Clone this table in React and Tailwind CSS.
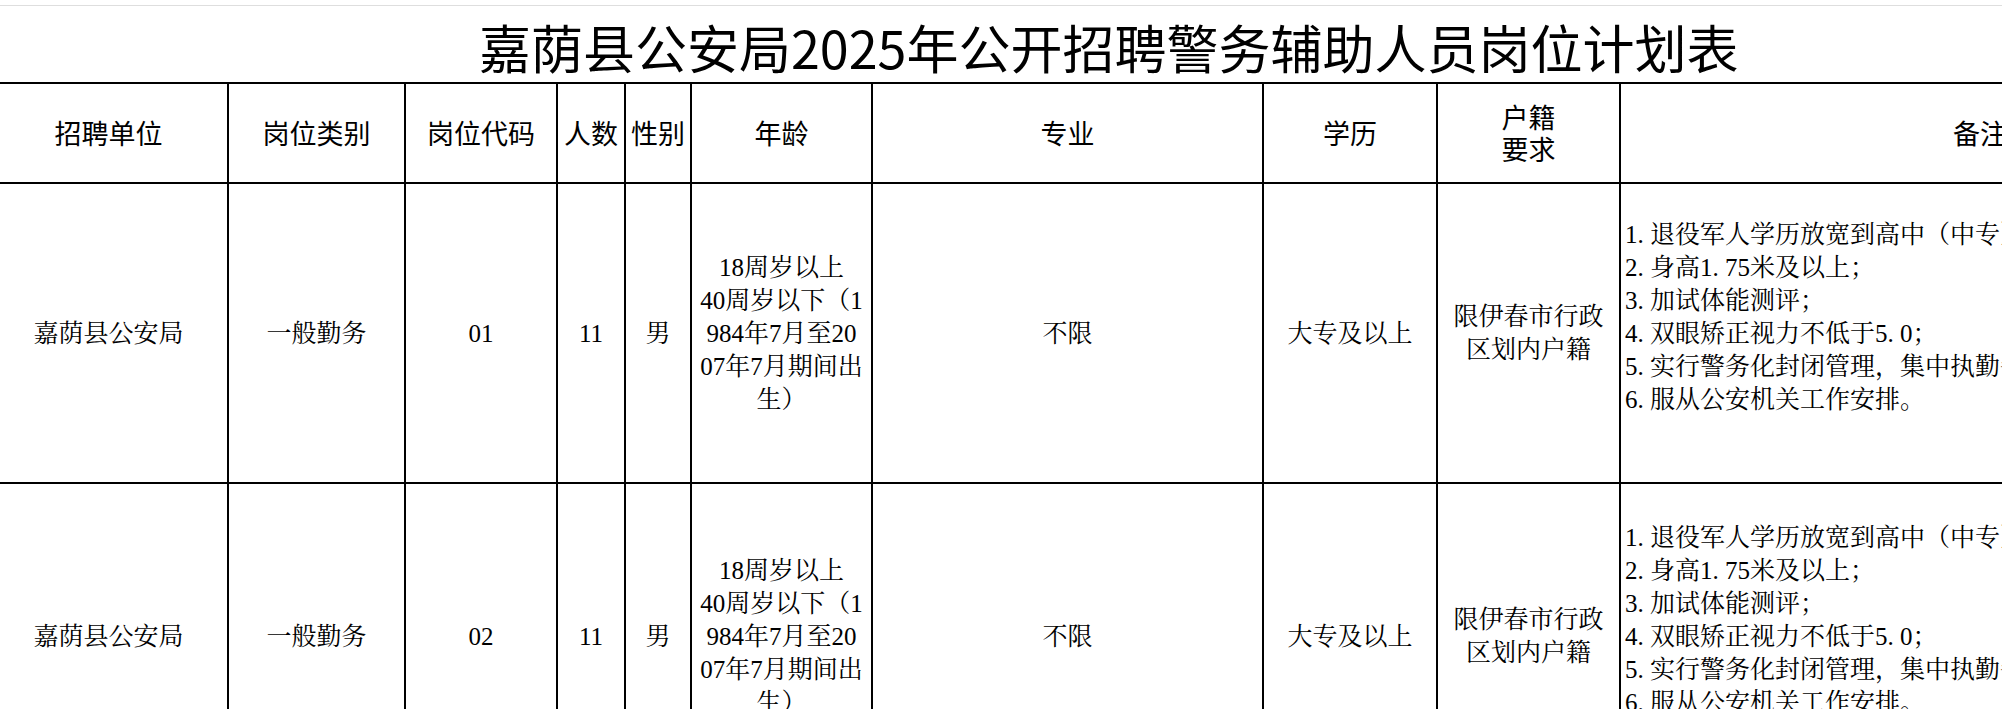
import React from 'react';

const headFont = "font-['Noto_Sans_CJK_SC',sans-serif]";
const bodyFont = "font-['Liberation_Serif','Noto_Serif_CJK_SC','Noto_Sans_CJK_SC',serif]";

const cell = 'border-2 border-black p-0 text-center align-middle';

const colWidths = [
    'w-[239px]', 'w-[177px]', 'w-[152px]', 'w-[68px]', 'w-[66px]',
    'w-[181px]', 'w-[391px]', 'w-[174px]', 'w-[183px]', 'w-[720px]',
];

const remarks = [
    '1.退役军人学历放宽到高中（中专）学历；',
    '2.身高1.75米及以上；',
    '3.加试体能测评；',
    '4.双眼矫正视力不低于5.0；',
    '5.实行警务化封闭管理，集中执勤备勤；',
    '6.服从公安机关工作安排。',
];

// periods take a half-width cell, like the spreadsheet's SimSun
const Remark = ({ text }) => (
    <div className="h-[33px] whitespace-nowrap">
        {text.split(/(\.)/).map((part, i) =>
            part === '.' ? (
                <span key={i} className="inline-block w-[12.5px]">.</span>
            ) : (
                <span key={i}>{part}</span>
            )
        )}
    </div>
);

const rows = [
    { code: '01', h: 'h-[300px]' },
    { code: '02', h: 'h-[306px]' },
];

export default function App() {
    return (
        <div className="w-[2002px] h-[709px] overflow-hidden bg-white text-black">
            <div className="h-[6px] border-b border-[#dedede]" />

            {/* title */}
            <div className={`h-[76px] pt-[5px] pl-[479px] flex items-center ${headFont}`}>
                <h1 className="text-[52px] leading-none whitespace-nowrap">嘉荫县公安局2025年公开招聘警务辅助人员岗位计划表</h1>
            </div>

            <table className="table-fixed border-collapse -ml-[12px] w-[2351px]">
                <colgroup>
                    {colWidths.map((w, i) => (
                        <col key={i} className={w} />
                    ))}
                </colgroup>
                <thead>
                    <tr className={`h-[100px] text-[27px] leading-[32px] ${headFont}`}>
                        <th className={`${cell} font-normal`}>招聘单位</th>
                        <th className={`${cell} font-normal`}>岗位类别</th>
                        <th className={`${cell} font-normal`}>岗位代码</th>
                        <th className={`${cell} font-normal`}>人数</th>
                        <th className={`${cell} font-normal`}>性别</th>
                        <th className={`${cell} font-normal`}>年龄</th>
                        <th className={`${cell} font-normal`}>专业</th>
                        <th className={`${cell} font-normal`}>学历</th>
                        <th className={`${cell} font-normal`}>户籍<br />要求</th>
                        <th className={`${cell} font-normal`}>备注</th>
                    </tr>
                </thead>
                <tbody className={`text-[25px] leading-[33px] ${bodyFont}`}>
                    {rows.map((r) => (
                        <tr key={r.code} className={r.h}>
                            <td className={cell}>嘉荫县公安局</td>
                            <td className={cell}>一般勤务</td>
                            <td className={cell}>{r.code}</td>
                            <td className={cell}>11</td>
                            <td className={cell}>男</td>
                            <td className={cell}>
                                18周岁以上<br />
                                40周岁以下（1<br />
                                984年7月至20<br />
                                07年7月期间出<br />
                                生）
                            </td>
                            <td className={cell}>不限</td>
                            <td className={cell}>大专及以上</td>
                            <td className={cell}>
                                限伊春市行政<br />
                                区划内户籍
                            </td>
                            <td className={`${cell} text-left pl-[4px]`}>
                                {remarks.map((t) => (
                                    <Remark key={t} text={t} />
                                ))}
                                <div className="h-[33px]" />
                            </td>
                        </tr>
                    ))}
                </tbody>
            </table>
        </div>
    );
}
